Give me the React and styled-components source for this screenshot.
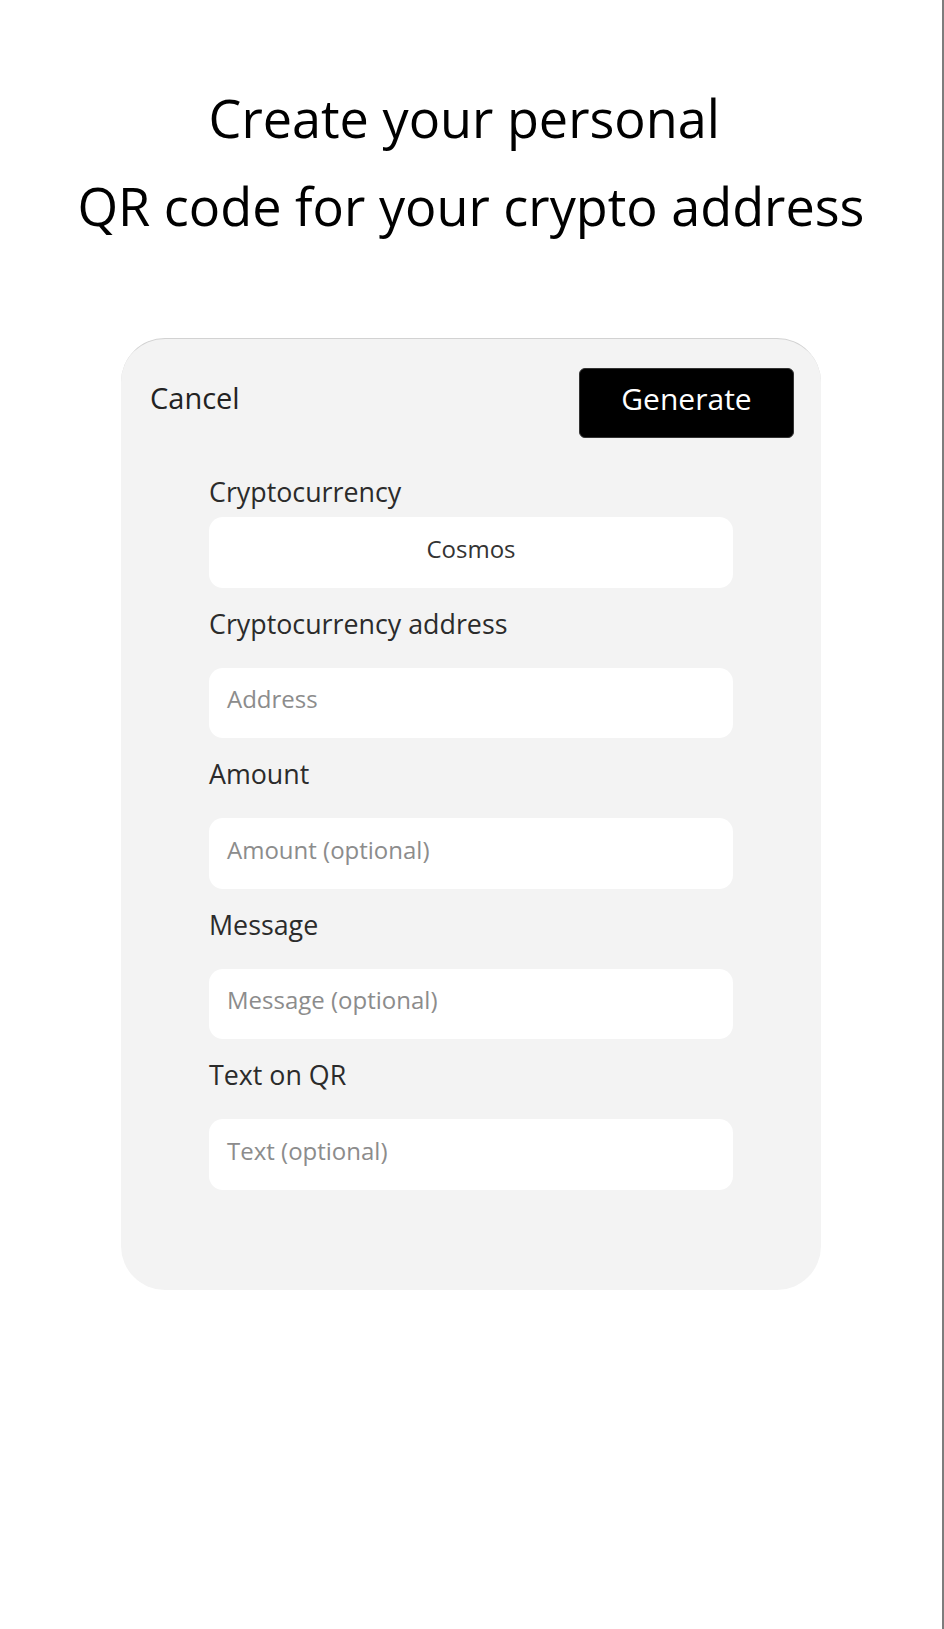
import React from 'react';
import styled, { createGlobalStyle } from 'styled-components';

const GlobalStyle = createGlobalStyle`
  html, body {
    margin: 0;
    padding: 0;
    background: #ffffff;
  }

  body {
    font-family: 'Open Sans', 'Noto Sans', sans-serif;
  }

  * {
    box-sizing: border-box;
  }
`;

const Page = styled.div`
  min-height: 100vh;
  border-right: 2px solid #7d7d7d;
  padding-top: 74px;
  display: flex;
  flex-direction: column;
  align-items: center;
`;

const Title = styled.h1`
  margin: 0;
  font-size: 52.2px;
  line-height: 88px;
  font-weight: 400;
  color: #000;
  text-align: center;
`;

const Card = styled.div`
  width: 700px;
  margin-top: 88px;
  padding: 29px 27px 100px 28px;
  background-color: #f3f3f3;
  border-top: 1px solid #d2d2d2;
  border-radius: 44px;
`;

const Header = styled.div`
  display: flex;
  justify-content: space-between;
  align-items: center;
  height: 70px;
`;

const CancelButton = styled.button`
  background: none;
  border: none;
  padding: 0 0 12px 1px;
  font-family: inherit;
  font-size: 29px;
  color: #222;
  cursor: pointer;
`;

const GenerateButton = styled.button`
  width: 215px;
  height: 70px;
  padding: 0 0 10px;
  background-color: #000;
  color: #fff;
  border: 1px solid #333;
  border-radius: 6px;
  font-family: inherit;
  font-size: 30px;
  cursor: pointer;
`;

const Form = styled.div`
  display: flex;
  flex-direction: column;
  gap: 18px;
  margin-top: 36px;
  padding: 0 61px 0 60px;
`;

const Field = styled.div`
  display: flex;
  flex-direction: column;
`;

const Label = styled.label`
  font-size: 26.8px;
  line-height: 36px;
  color: #2b2b2b;
  margin-bottom: ${(p) => (p.$tight ? '7px' : '26px')};
`;

const Box = styled.div`
  height: 70.5px;
  padding: 0 18px 8px;
  display: flex;
  align-items: center;
  justify-content: ${(p) => (p.$center ? 'center' : 'flex-start')};
  background: #fff;
  border-radius: 14px;
  font-size: 24px;
  color: ${(p) => (p.$placeholder ? '#8c8c8c' : '#333')};
`;

const fields = [
  { label: 'Cryptocurrency address', placeholder: 'Address' },
  { label: 'Amount', placeholder: 'Amount (optional)' },
  { label: 'Message', placeholder: 'Message (optional)' },
  { label: 'Text on QR', placeholder: 'Text (optional)' },
];

export default function App() {
  return (
    <>
      <GlobalStyle />
      <Page>
        <Title>
          Create your personal{'\u00a0'}
          <br />
          QR code for your crypto address
        </Title>
        <Card>
          <Header>
            <CancelButton>Cancel</CancelButton>
            <GenerateButton>Generate</GenerateButton>
          </Header>
          <Form>
            <Field>
              <Label $tight>Cryptocurrency</Label>
              <Box $center>Cosmos</Box>
            </Field>
            {fields.map((f) => (
              <Field key={f.label}>
                <Label>{f.label}</Label>
                <Box $placeholder>{f.placeholder}</Box>
              </Field>
            ))}
          </Form>
        </Card>
      </Page>
    </>
  );
}
